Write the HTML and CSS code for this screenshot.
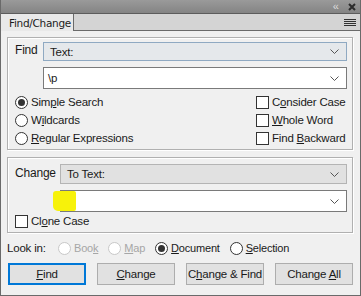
FILE: index.html
```html
<!DOCTYPE html>
<html lang="en">
<head>
    <meta charset="UTF-8">
    <title>Find/Change</title>
    <link rel="stylesheet" href="styles.css">
</head>
<body>
    <div class="window">
        <div class="titlebar">
            <span class="collapse">&lsaquo;&lsaquo;</span>
            <svg class="close" width="8" height="8" viewBox="0 0 8 8"><path d="M1 1L7 7M7 1L1 7" stroke="#2b2b2b" stroke-width="2"/></svg>
        </div>
        <div class="tabs">
            <div class="tab">Find/Change</div>
            <div class="tab-fill">
                <svg class="menu" width="12" height="8" viewBox="0 0 12 8"><path d="M0 0.5H12M0 2.5H12M0 4.5H12M0 6.5H12" stroke="#333" stroke-width="1"/></svg>
            </div>
        </div>

        <div class="panel">
            <div class="group find-group">
                <div class="field-row">
                    <span class="label find-label">Find</span>
                    <div class="fields">
                        <div class="select blue">
                            <span>Text:</span>
                            <svg class="chev" width="9" height="5" viewBox="0 0 9 5"><path d="M0.5 0.5L4.5 4.5L8.5 0.5" fill="none" stroke="#555"/></svg>
                        </div>
                        <div class="combo">
                            <span>\p</span>
                            <svg class="chev" width="9" height="5" viewBox="0 0 9 5"><path d="M0.5 0.5L4.5 4.5L8.5 0.5" fill="none" stroke="#555"/></svg>
                        </div>
                    </div>
                </div>
                <div class="options">
                    <div class="col">
                        <label class="opt"><span class="radio checked"></span><span>Sim<u>p</u>le Search</span></label>
                        <label class="opt"><span class="radio"></span><span>W<u>i</u>ldcards</span></label>
                        <label class="opt"><span class="radio"></span><span><u>R</u>egular Expressions</span></label>
                    </div>
                    <div class="col right-col">
                        <label class="opt"><span class="check"></span><span>C<u>o</u>nsider Case</span></label>
                        <label class="opt"><span class="check"></span><span><u>W</u>hole Word</span></label>
                        <label class="opt"><span class="check"></span><span>Find <u>B</u>ackward</span></label>
                    </div>
                </div>
            </div>

            <div class="group change-group">
                <div class="field-row">
                    <span class="label change-label">Change</span>
                    <div class="fields">
                        <div class="select grey">
                            <span>To Text:</span>
                            <svg class="chev" width="9" height="5" viewBox="0 0 9 5"><path d="M0.5 0.5L4.5 4.5L8.5 0.5" fill="none" stroke="#555"/></svg>
                        </div>
                        <div class="combo marked">
                            <span class="highlight"></span>
                            <span></span>
                            <svg class="chev" width="9" height="5" viewBox="0 0 9 5"><path d="M0.5 0.5L4.5 4.5L8.5 0.5" fill="none" stroke="#555"/></svg>
                        </div>
                    </div>
                </div>
                <label class="opt clone"><span class="check"></span><span>Cl<u>o</u>ne Case</span></label>
            </div>

            <div class="lookin">
                <span class="lookin-label">Look in:</span>
                <label class="opt disabled"><span class="radio"></span><span>Boo<u>k</u></span></label>
                <label class="opt disabled"><span class="radio"></span><span><u>M</u>ap</span></label>
                <label class="opt"><span class="radio checked"></span><span><u>D</u>ocument</span></label>
                <label class="opt"><span class="radio"></span><span><u>S</u>election</span></label>
            </div>

            <div class="buttons">
                <button class="btn default"><u>F</u>ind</button>
                <button class="btn"><u>C</u>hange</button>
                <button class="btn">C<u>h</u>ange &amp; Find</button>
                <button class="btn">Change <u>A</u>ll</button>
            </div>
        </div>
    </div>
</body>
</html>
```

FILE: styles.css
```css
body {
    margin: 0;
    background: #f0f0f0;
    font-family: "Liberation Sans", Arial, sans-serif;
    font-size: 11px;
    letter-spacing: -0.2px;
    color: #1a1a1a;
}
u {
    text-decoration: underline;
    text-underline-offset: 1px;
}
.window {
    width: 361px;
    height: 296px;
    box-sizing: border-box;
    background: #f0f0f0;
    border-left: 1px solid #6a6a6a;
    border-right: 1px solid #6a6a6a;
    border-bottom: 1px solid #6a6a6a;
}
.titlebar {
    height: 13px;
    background: linear-gradient(#9a9a9a, #848484);
    border-bottom: 1px solid #5c5c5c;
    display: flex;
    align-items: center;
    justify-content: flex-end;
    gap: 10px;
    padding-right: 4px;
}
.collapse {
    color: #dcdcdc;
    font-size: 11px;
    letter-spacing: -1px;
    line-height: 10px;
    margin-top: -2px;
}
.close {
    margin-top: 1px;
}
.tabs {
    height: 17px;
    display: flex;
}
.tab {
    width: 64px;
    padding-left: 8px;
    background: #e9e9e9;
    border-right: 1px solid #6a6a6a;
    font-family: "DejaVu Sans", sans-serif;
    font-size: 10.5px;
    letter-spacing: -0.3px;
    color: #1c1c1c;
    line-height: 18px;
}
.tab-fill {
    flex: 1;
    background: #d4d4d4;
    border-bottom: 1px solid #6a6a6a;
    display: flex;
    justify-content: flex-end;
    align-items: center;
    padding-right: 4px;
}
.menu {
    margin-top: 2px;
}
.panel {
    padding: 6px 7px 0 6px;
    display: flex;
    flex-direction: column;
}
.group {
    border: 1px solid #b0b0b0;
    box-shadow: 1px 1px 0 #fff, inset 1px 1px 0 #fff;
    padding: 4px 5px 0 7px;
}
.find-group {
    height: 113px;
    box-sizing: border-box;
}
.change-group {
    margin-top: 7px;
    height: 76px;
    box-sizing: border-box;
    padding-top: 6px;
}
.field-row {
    display: flex;
}
.label {
    font-size: 12px;
    padding-top: 1px;
}
.find-label {
    width: 28px;
}
.change-label {
    width: 45px;
    padding-top: 2px;
}
.fields {
    flex: 1;
    display: flex;
    flex-direction: column;
    gap: 6px;
}
.select, .combo {
    display: flex;
    align-items: center;
    justify-content: space-between;
    box-sizing: border-box;
    padding: 0 7px 0 6px;
    font-size: 11.5px;
}
.select.blue {
    height: 19px;
    background: #e5e8eb;
    border: 1px solid #8fa9c2;
}
.select.grey {
    height: 20px;
    background: #e1e1e1;
    border: 1px solid #b4b4b4;
}
.combo {
    height: 22px;
    background: #fff;
    border: 1px solid #7a7a7a;
    padding-left: 4px;
}
.combo.marked {
    position: relative;
}
.highlight {
    position: absolute;
    left: -8px;
    top: 0;
    width: 23px;
    height: 20px;
    background: #f7f20a;
    border-radius: 3px 2px 2px 5px;
}
.chev {
    flex: none;
}
.options {
    display: flex;
    justify-content: space-between;
    margin-top: 4px;
}
.col {
    display: flex;
    flex-direction: column;
}
.right-col {
    width: 91px;
}
.opt {
    height: 18px;
    display: flex;
    align-items: center;
    gap: 3px;
    font-size: 11.5px;
    white-space: nowrap;
}
.radio {
    width: 11px;
    height: 11px;
    border: 1px solid #333;
    border-radius: 50%;
    background: #fff;
    position: relative;
    flex: none;
}
.radio.checked::after {
    content: "";
    position: absolute;
    left: 2px;
    top: 2px;
    width: 7px;
    height: 7px;
    border-radius: 50%;
    background: #333;
}
.check {
    width: 11px;
    height: 11px;
    border: 1px solid #333;
    background: #fff;
    flex: none;
}
.lookin {
    display: flex;
    align-items: center;
    height: 18px;
    margin-top: 6px;
    gap: 10px;
}
.lookin .opt {
    font-size: 11px;
}
.lookin-label {
    font-size: 11.5px;
    width: 41px;
}
.disabled {
    color: #a6a6a6;
}
.disabled .radio {
    border-color: #c8c8c8;
}
.buttons {
    display: flex;
    justify-content: space-between;
    margin-top: 6px;
    padding-left: 1px;
}
.btn {
    width: 78px;
    height: 22px;
    background: #e1e1e1;
    border: 1px solid #adadad;
    font-family: "Liberation Sans", Arial, sans-serif;
    font-size: 11.5px;
    letter-spacing: -0.2px;
    color: #1a1a1a;
    padding: 0;
    white-space: nowrap;
}
.btn.default {
    border: 2px solid #0078d7;
}
```
